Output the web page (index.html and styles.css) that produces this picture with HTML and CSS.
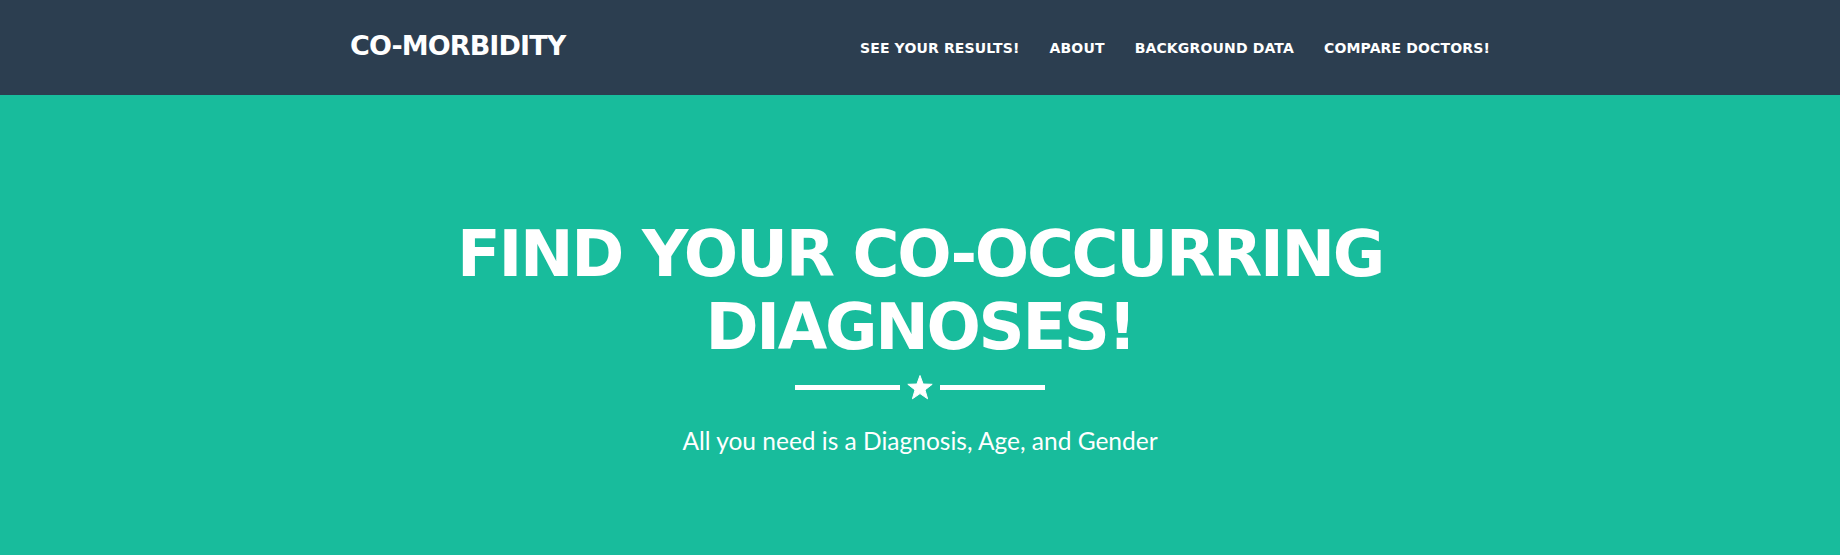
FILE: index.html
```html
<!DOCTYPE html>
<html>
<head>
<meta charset="utf-8">
<link rel="stylesheet" href="styles.css">
</head>
<body>
<nav class="navbar">
  <div class="nav-inner">
    <a class="brand" href="#">CO-MORBIDITY</a>
    <ul class="nav-links">
      <li><a href="#">SEE YOUR RESULTS!</a></li>
      <li><a href="#">ABOUT</a></li>
      <li><a href="#">BACKGROUND DATA</a></li>
      <li><a href="#">COMPARE DOCTORS!</a></li>
    </ul>
  </div>
</nav>
<header class="hero">
  <h1 class="name">FIND YOUR CO-OCCURRING<br>DIAGNOSES!</h1>
  <div class="star-divider">
    <span class="line"></span>
    <svg class="star" width="26" height="25" viewBox="0 0 26 25"><polygon points="13,0.5 16.1,9 25.2,9.3 18,14.9 20.6,23.8 13,18.6 5.4,23.8 8,14.9 0.8,9.3 9.9,9" fill="#fff" stroke="#fff" stroke-width="1" stroke-linejoin="round"/></svg>
    <span class="line"></span>
  </div>
  <p class="skills">All you need is a Diagnosis, Age, and Gender</p>
</header>
</body>
</html>
```
FILE: styles.css
```css
html, body {
  margin: 0;
  padding: 0;
  height: 100%;
  background: #18bc9c;
}
body {
  font-family: "DejaVu Sans", sans-serif;
  color: #fff;
}
.navbar {
  background: #2c3e50;
  height: 95px;
}
.nav-inner {
  width: 1140px;
  margin: 0 auto;
  display: flex;
  justify-content: space-between;
  align-items: flex-start;
}
.brand {
  color: #fff;
  text-decoration: none;
  font-weight: 700;
  font-size: 27px;
  letter-spacing: -0.9px;
  line-height: 28px;
  padding-top: 32px;
}
.nav-links {
  list-style: none;
  margin: 0;
  padding: 0;
  display: flex;
  gap: 30px;
  padding-top: 38px;
}
.nav-links a {
  color: #fff;
  text-decoration: none;
  font-weight: 700;
  font-size: 14px;
  letter-spacing: 0.15px;
  line-height: 16px;
}
.hero {
  text-align: center;
  padding-top: 123px;
}
.name {
  margin: 0;
  font-size: 64px;
  letter-spacing: -2.3px;
  line-height: 73px;
  font-weight: 700;
}
.star-divider {
  display: flex;
  justify-content: center;
  align-items: center;
  gap: 7px;
  margin-top: 11px;
}
.star-divider .line {
  width: 105px;
  height: 5px;
  background: #fff;
}
.star {
  display: block;
}
.skills {
  margin: 26px 0 0;
  font-family: Lato, sans-serif;
  font-size: 24.5px;
  line-height: 30px;
  font-weight: 400;
}
```
